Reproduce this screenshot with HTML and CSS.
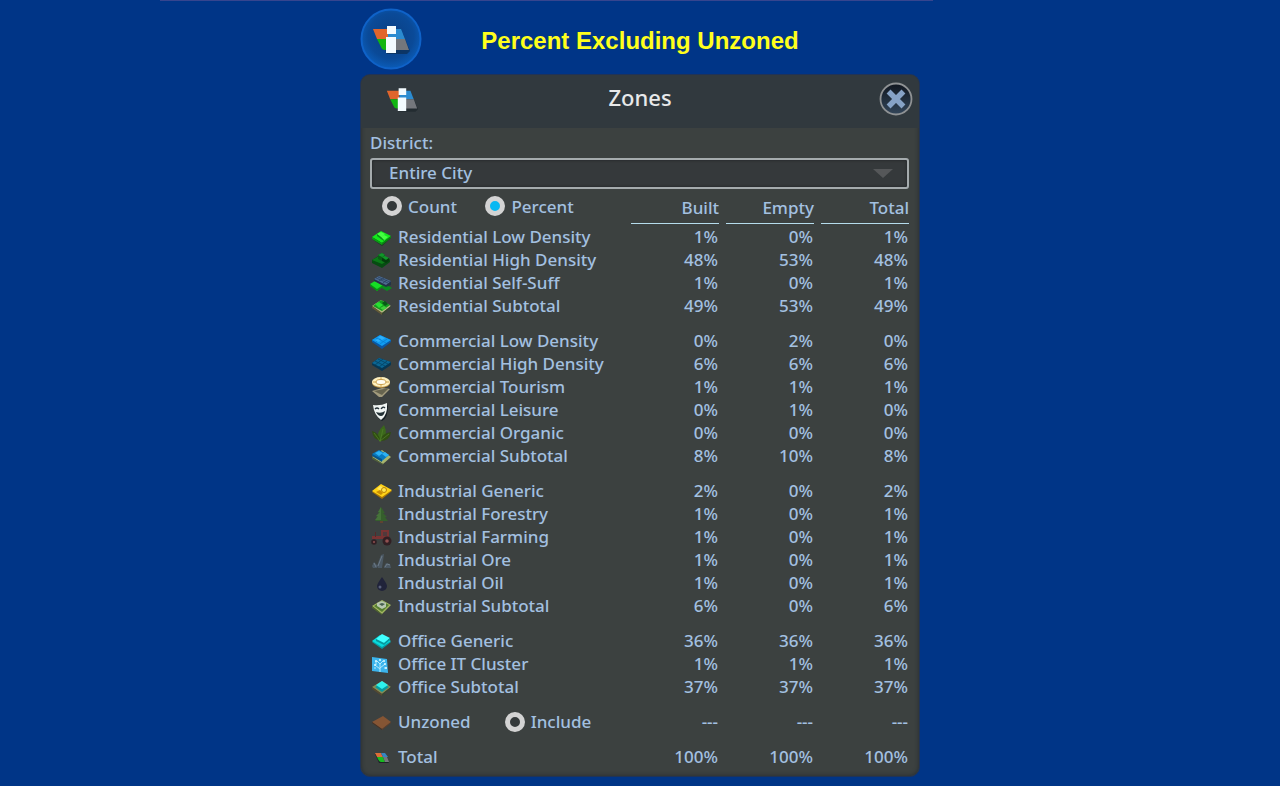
FILE: index.html
```html
<!DOCTYPE html>
<html lang="en">
<head>
<meta charset="utf-8">
<title>Zones</title>
<link rel="stylesheet" href="styles.css">
</head>
<body>
<svg class="defs" aria-hidden="true">
  <defs>
    <radialGradient id="disc" cx="50%" cy="45%" r="55%"><stop offset="0" stop-color="#0b3f82"/><stop offset=".7" stop-color="#0a4a98"/><stop offset="1" stop-color="#0b5cb8"/></radialGradient>
    <linearGradient id="closebg" x1="0" y1="0" x2="0" y2="1"><stop offset="0" stop-color="#10161f"/><stop offset="1" stop-color="#33465a"/></linearGradient>
    <symbol id="zones-info" viewBox="0 0 38 30">
      <path d="M6 9h25l7 17-3 3H15z" fill="#10181f" opacity=".4"/>
      <path d="M1 4h15v10H5z" fill="#e0652c"/><path d="M16 4h13l4 10H16z" fill="#2b8bd0"/>
      <path d="M5 14h11v11h-3q-3 0-4-3z" fill="#12b512"/><path d="M16 14h17l4 11H16z" fill="#74777c"/>
      <path d="M15 1h9v8h-9zM14 12h10v16H14z" fill="#f3fbff"/>
    </symbol>
  </defs>
</svg>
<main class="stage">
  <header class="banner">
    <svg class="badge" viewBox="0 0 62 62" aria-hidden="true"><circle cx="31" cy="31" r="29.5" fill="url(#disc)" stroke="#0f62c8" stroke-width="2"/><use href="#zones-info" x="12" y="17" width="38" height="30"/></svg>
    <h1 class="banner-title">Percent Excluding Unzoned</h1>
  </header>
  <section class="panel">
    <header class="panel-head">
      <svg class="panel-icon" viewBox="0 0 38 30" aria-hidden="true"><use href="#zones-info" width="38" height="30"/></svg>
      <h2 class="panel-title">Zones</h2>
      <button class="close" type="button" aria-label="Close"><svg class="close-icon" viewBox="0 0 34 34"><circle cx="17" cy="17" r="15.5" fill="url(#closebg)" stroke="#8f9294" stroke-width="1.8"/><path d="M11.500 11.500l11 11M22.500 11.500l-11 11" stroke="#86a2c6" stroke-width="5.5" stroke-linecap="square"/></svg></button>
    </header>
    <div class="panel-body">
      <label class="district-label" for="district">District:</label>
      <div class="select-box">
        <select class="district" id="district"><option>Entire City</option></select>
        <svg class="arrow" viewBox="0 0 20 10" aria-hidden="true"><path d="M0 0h20L10 9z" fill="#555759"/></svg>
      </div>
      <table class="zones">
        <thead>
          <tr>
            <th class="modes" scope="col">
              <label class="choice"><input class="radio" type="radio" name="mode">Count</label>
              <label class="choice"><input class="radio" type="radio" name="mode" checked>Percent</label>
            </th>
            <th class="col" scope="col"><span class="col-name">Built</span></th>
            <th class="col" scope="col"><span class="col-name">Empty</span></th>
            <th class="col" scope="col"><span class="col-name">Total</span></th>
          </tr>
        </thead>
        <tbody>
          <tr><th scope="row"><div class="name"><svg class="icon" viewBox="0 0 22 22"><path d="M2 13l9-6 10 5-9 8z" fill="#183a20"/><path d="M2 11l9-6 10 5-9 7z" fill="#13e81c"/><path d="M2 11l10 6v2L2 13z" fill="#0aa015"/><path d="M12 17l9-7v2l-9 7z" fill="#078a10"/><path d="M7 8l4-2 4 2-4 3zM11 11l3-2 4 2-4 3z" fill="#46ff43"/><path d="M7 8l4 3v2l-4-3zM11 11l3 3v1l-3-2z" fill="#0b8e18"/></svg>Residential Low Density</div></th><td>1%</td><td>0%</td><td>1%</td></tr>
          <tr><th scope="row"><div class="name"><svg class="icon" viewBox="0 0 22 22"><path d="M2 11l8-5 10 4v3l-8 6-10-5z" fill="#064c12"/><path d="M2 11l9-5 9 4-8 5z" fill="#0b7a18"/><path d="M8 6l4-2 3 2v4l-3 2-4-2z" fill="#0a5d16"/><path d="M8 6l4-2 3 2-3 2zM12 8l3-1 4 2-3 2z" fill="#11962a"/><path d="M12 9l4 2 3-2v3l-3 2-4-2z" fill="#043c0d"/></svg>Residential High Density</div></th><td>48%</td><td>53%</td><td>48%</td></tr>
          <tr><th scope="row"><div class="name"><svg class="icon" viewBox="0 0 22 22"><path d="M10 15l5-3 7 4-5 3z" fill="#0a8c20"/><path d="M0 12l5-3 8 5-6 5z" fill="#16df25"/><path d="M0 12l7 5 6-4v2l-6 4-7-5z" fill="#079313"/><path d="M4 7l5-3 12 5v4l-5 2L4 9z" fill="#243347"/><path d="M4 7l5-3 12 5-5 4z" fill="#4f6c91"/><path d="M6 6l12 5M8 5l12 5M9 9l5-3M13 11l4-3" stroke="#29425f" stroke-width=".8"/></svg>Residential Self-Suff</div></th><td>1%</td><td>0%</td><td>1%</td></tr>
          <tr><th scope="row"><div class="name"><svg class="icon" viewBox="0 0 22 22"><path d="M2 11l9-6 10 6-9 7z" fill="#b3b980"/><path d="M2 11l10 7v2L2 13z" fill="#645a35"/><path d="M12 18l9-7v1l-9 8z" fill="#35462c"/><path d="M3 11l8-6 9 5-8 6z" fill="#149a1e"/><path d="M5 9l4-2 4 3-4 3z" fill="#28df32"/><path d="M12 8l3-2 3 3-3 2z" fill="#075916"/><path d="M10 13l4-2 3 2-4 2z" fill="#40cf3d"/></svg>Residential Subtotal</div></th><td>49%</td><td>53%</td><td>49%</td></tr>
        </tbody>
        <tbody class="group">
          <tr><th scope="row"><div class="name"><svg class="icon" viewBox="0 0 22 22"><path d="M2 10l8-5 11 5v2l-9 7-10-7z" fill="#0b57a2"/><path d="M2 10l8-5 11 5-9 6z" fill="#109df2"/><path d="M6 8l10 5M14 7l-8 5M17 9l-7 5" stroke="#0b7fd0" stroke-width=".8"/><path d="M8 7l3-1 4 2-3 2zM5 10l3-1 3 2-3 1z" fill="#2fb0fb"/></svg>Commercial Low Density</div></th><td>0%</td><td>2%</td><td>0%</td></tr>
          <tr><th scope="row"><div class="name"><svg class="icon" viewBox="0 0 22 22"><path d="M2 10l7-5 12 4v3l-9 6-10-6z" fill="#073753"/><path d="M2 10l7-5 12 4-9 6z" fill="#0b6694"/><path d="M5 8l10 5M8 6l10 5M13 6l-8 6M17 8l-8 6" stroke="#064667" stroke-width=".9"/></svg>Commercial High Density</div></th><td>6%</td><td>6%</td><td>6%</td></tr>
          <tr><th scope="row"><div class="name"><svg class="icon" viewBox="0 0 22 22"><path d="M2 15l10-3 8 1-8 8H9z" fill="#a29b7d"/><path d="M4 15l15-3-7 7z" fill="#66644f"/><ellipse cx="11" cy="7" rx="9" ry="5" fill="#b48b3c"/><ellipse cx="11" cy="6" rx="9" ry="5" fill="#fff1bf"/><ellipse cx="11" cy="6" rx="5" ry="2.500" fill="#fffdf1" stroke="#c99e4c"/><path d="M3 6h3M16 6h3M11 1v2M11 9v2" stroke="#cfa451"/></svg>Commercial Tourism</div></th><td>1%</td><td>1%</td><td>1%</td></tr>
          <tr><th scope="row"><div class="name"><svg class="icon" viewBox="0 0 22 22"><path d="M5 7q7 1 11-2l2 2q0 12-6 15-7-4-8-14z" fill="#172025"/><path d="M3 6q8 1 14-2 1 12-6 17-7-5-8-15z" fill="#f0f5f3"/><path d="M5 10q2-2 4 0M11 10q2-3 4-1" fill="none" stroke="#263238" stroke-width="1.300"/><path d="M6 13q5 2 9-1-1 5-4 5-3 0-5-4z" fill="#243236"/></svg>Commercial Leisure</div></th><td>0%</td><td>1%</td><td>0%</td></tr>
          <tr><th scope="row"><div class="name"><svg class="icon" viewBox="0 0 22 22"><path d="M9 19Q5 11 14 3q5 10-3 16z" fill="#3b681b"/><path d="M10 18Q3 18 2 9q7 2 8 9zM10 19q2-8 11-9-1 9-11 9z" fill="#304f12"/><path d="M10 20l3-13M4 11l6 8 9-7" fill="none" stroke="#4f7d28" stroke-width=".8"/></svg>Commercial Organic</div></th><td>0%</td><td>0%</td><td>0%</td></tr>
          <tr><th scope="row"><div class="name"><svg class="icon" viewBox="0 0 22 22"><path d="M2 12l10-7 9 7-8 7z" fill="#a7b46d"/><path d="M2 12l11 7v1L2 14z" fill="#51603b"/><path d="M2 9l7-4 10 5-7 6z" fill="#087ac0"/><path d="M2 9l10 5v3L2 11z" fill="#07558c"/><path d="M5 8l4-2 4 2-4 3zM12 9l3-2 4 3-3 2z" fill="#2bb1f5"/></svg>Commercial Subtotal</div></th><td>8%</td><td>10%</td><td>8%</td></tr>
        </tbody>
        <tbody class="group">
          <tr><th scope="row"><div class="name"><svg class="icon" viewBox="0 0 22 22"><path d="M2 12l9-7 11 6-10 8z" fill="#a77507"/><path d="M2 11l9-7 11 6-10 7z" fill="#ffd216"/><path d="M7 9l3-3 5 2-3 3z" fill="#ffe85e"/><circle cx="14" cy="10" r="2.500" fill="#ffe64d" stroke="#b98109"/><path d="M6 12l4-2 3 3-2 2z" fill="#c98e05"/></svg>Industrial Generic</div></th><td>2%</td><td>0%</td><td>2%</td></tr>
          <tr><th scope="row"><div class="name"><svg class="icon" viewBox="0 0 22 22"><path d="M10 16h3v4h-3z" fill="#5f4330"/><path d="M11 4l4 6h-2l4 4h-2l3 4H5l3-4H6l4-4H8z" fill="#355f2c"/><path d="M11 4v13H5l3-4H6l4-4H8z" fill="#46733a"/></svg>Industrial Forestry</div></th><td>1%</td><td>0%</td><td>1%</td></tr>
          <tr><th scope="row"><div class="name"><svg class="icon" viewBox="0 0 22 22"><path d="M2 10h9V4h8v9H2z" fill="#793333"/><path d="M13 6h4v4h-4z" fill="#50393b"/><path d="M5 6h1v5H5z" fill="#572828"/><circle cx="17" cy="15" r="4.500" fill="#311f23"/><circle cx="17" cy="15" r="1.800" fill="#915050"/><circle cx="4" cy="16" r="2.800" fill="#311f23"/><circle cx="4" cy="16" r="1" fill="#915050"/></svg>Industrial Farming</div></th><td>1%</td><td>0%</td><td>1%</td></tr>
          <tr><th scope="row"><div class="name"><svg class="icon" viewBox="0 0 22 22"><path d="M2 17l2-4 3 3v3H3zM7 17l4-11 3-1-2 14H8zM14 18l2-4 4 1 1 4h-7z" fill="#4b5863"/><path d="M8 17l4-10M4 14l2 4M15 18l2-3 3 1" fill="none" stroke="#6d7b88"/></svg>Industrial Ore</div></th><td>1%</td><td>0%</td><td>1%</td></tr>
          <tr><th scope="row"><div class="name"><svg class="icon" viewBox="0 0 22 22"><path d="M12 5q5 7 5 9a5 5 0 01-10 0q0-2 5-9z" fill="#20233a"/><circle cx="10" cy="15" r="1.500" fill="#59617d"/></svg>Industrial Oil</div></th><td>1%</td><td>0%</td><td>1%</td></tr>
          <tr><th scope="row"><div class="name"><svg class="icon" viewBox="0 0 22 22"><path d="M2 11l10-6 9 5-9 9z" fill="#a2b760"/><path d="M2 11l10 8v1L2 13z" fill="#50682d"/><path d="M4 11l8-5 7 4-7 7z" fill="#557e31"/><path d="M7 8l5-2 4 2v4l-4 2-5-3z" fill="#b7c7b1"/><path d="M9 9l3-1 3 1-3 2z" fill="#455e51"/></svg>Industrial Subtotal</div></th><td>6%</td><td>0%</td><td>6%</td></tr>
        </tbody>
        <tbody class="group">
          <tr><th scope="row"><div class="name"><svg class="icon" viewBox="0 0 22 22"><path d="M2 12l8-6 11 6-9 7z" fill="#079ca3"/><path d="M2 11l8-6 11 6-9 6z" fill="#08d9dc"/><path d="M6 9l6-5 8 4-6 5z" fill="#40ffff"/><path d="M6 9l8 4 6-5v2l-6 5-8-4z" fill="#07989c"/></svg>Office Generic</div></th><td>36%</td><td>36%</td><td>36%</td></tr>
          <tr><th scope="row"><div class="name"><svg class="icon" viewBox="0 0 22 22"><path d="M2 4l15 2 1 14-16-2z" fill="#3bb4ed"/><path d="M10 19v-8M10 16l-5-4M10 15l5-4M6 15H4M14 15h3M10 11L7 8M10 11l3-3M6 12V8" fill="none" stroke="#b5eafc" stroke-width="1"/><g fill="#d9f9ff"><circle cx="6" cy="8" r="1"/><circle cx="10" cy="7" r="1"/><circle cx="14" cy="8" r="1"/><circle cx="15" cy="11" r="1"/><circle cx="5" cy="12" r="1"/><circle cx="16" cy="15" r="1"/></g></svg>Office IT Cluster</div></th><td>1%</td><td>1%</td><td>1%</td></tr>
          <tr><th scope="row"><div class="name"><svg class="icon" viewBox="0 0 22 22"><path d="M2 11l10-6 9 6-9 7z" fill="#858c55"/><path d="M2 11l10 7v2L2 13z" fill="#564a30"/><path d="M12 18l9-7v1l-9 8z" fill="#394532"/><path d="M5 11l7-4 7 4-7 5z" fill="#079ca0"/><path d="M6 9l6-4 6 4-6 4z" fill="#2df3ed"/></svg>Office Subtotal</div></th><td>37%</td><td>37%</td><td>37%</td></tr>
        </tbody>
        <tbody class="group">
          <tr><th scope="row"><div class="name"><svg class="icon" viewBox="0 0 22 22"><path d="M2 11l11-6 8 6-9 7z" fill="#855534"/><path d="M2 11l10 7v1L2 12z" fill="#4b3020"/><path d="M12 18l9-7v1l-9 7z" fill="#613e29"/></svg><span class="unzoned">Unzoned</span><label class="choice"><input class="radio" type="radio" name="include">Include</label></div></th><td>---</td><td>---</td><td>---</td></tr>
        </tbody>
        <tbody class="group">
          <tr><th scope="row"><div class="name"><svg class="icon" viewBox="0 0 22 22"><path d="M5 8h8l6 9H9z" fill="#1c2426"/><path d="M5 7h6l2 4H7z" fill="#db6e37"/><path d="M11 7h4l3 4h-5z" fill="#3686c2"/><path d="M7 11h6l2 5h-4q-2 0-4-5z" fill="#19bb20"/><path d="M13 11h4l2 5h-4z" fill="#75777b"/></svg>Total</div></th><td>100%</td><td>100%</td><td>100%</td></tr>
        </tbody>
      </table>
    </div>
  </section>
</main>
</body>
</html>
```
FILE: styles.css
```css
* { box-sizing: border-box; }
body {
  margin: 0;
  min-height: 100vh;
  background: #003587;
  color: #a3c0e0;
  font: 500 17px/23px "Noto Sans", "Open Sans", sans-serif;
}
.defs { position: absolute; width: 0; height: 0; }
.stage {
  min-height: 100vh;
  padding-top: 8px;
  background: linear-gradient(#36458f, #36458f) 31.6% 0 / 60.4% 1px no-repeat;
}
.banner {
  display: grid;
  grid-template-columns: 62px 1fr 62px;
  align-items: center;
  max-width: 560px;
  margin: 0 auto;
  padding-bottom: 4px;
}
.badge { display: block; width: 62px; height: 62px; }
.banner-title {
  margin: 0;
  padding-top: 4px;
  color: #ffff1c;
  font: bold 24px/28px "Liberation Sans", Arial, sans-serif;
  text-align: center;
  white-space: nowrap;
}
.panel {
  max-width: 560px;
  margin: 0 auto;
  border: 1px solid #1f3358;
  border-radius: 10px;
  background: #3c4140;
  box-shadow: inset 0 0 4px #242b2f;
}
.panel-head {
  display: grid;
  grid-template-columns: 54px 1fr 54px;
  align-items: center;
  padding: 7px 6px 12px;
  border-radius: 9px 9px 0 0;
  background: #31393e;
}
.panel-icon { display: block; justify-self: end; width: 38px; height: 28px; padding: 2px 3px 0; }
.panel-title {
  margin: 0;
  padding-bottom: 4px;
  color: #e8e9ea;
  font-size: 22px;
  font-weight: 500;
  line-height: 30px;
  text-align: center;
}
.close { justify-self: end; width: 34px; height: 34px; padding: 0; border: 0; background: none; }
.close-icon { display: block; width: 34px; height: 34px; }
.panel-body { padding: 3px 10px 8px 9px; }
.district-label { display: block; line-height: 24px; margin-bottom: 3px; }
.select-box { display: grid; align-items: center; }
.district {
  grid-area: 1 / 1;
  width: 100%;
  height: 31px;
  padding: 0 17px 2px;
  border: 2px solid #a5abad;
  border-radius: 3px;
  appearance: none;
  background: #35393b;
  box-shadow: inset 0 0 3px #1d2022;
  color: inherit;
  font: inherit;
}
.arrow { grid-area: 1 / 1; justify-self: end; width: 20px; height: 10px; margin-right: 16px; pointer-events: none; }
.zones { width: 100%; border-collapse: collapse; table-layout: fixed; }
.zones th, .zones td { padding: 0; font-weight: 500; text-align: left; }
.zones td { padding-right: 1px; text-align: right; }
.zones .modes { padding: 2px 0 0 12px; white-space: nowrap; }
.zones .col { width: 95px; padding: 8px 0 1px 7px; }
.col-name { display: block; padding-bottom: 4px; border-bottom: 1px solid #b5dcec; line-height: 22px; text-align: right; }
.choice { display: inline-flex; align-items: center; gap: 6px; margin-right: 24px; }
.radio {
  flex: none;
  width: 20px;
  height: 20px;
  margin: 0;
  border: 5px solid #d3d3d3;
  border-radius: 50%;
  appearance: none;
  background: #353a3b;
}
.radio:checked { background: #08b8f2; }
.name { display: flex; align-items: center; gap: 6px; height: 23px; white-space: nowrap; }
.icon { flex: none; width: 22px; height: 22px; }
.unzoned { margin-right: 28px; }
.group tr:first-child > * { padding-top: 12px; }
```
